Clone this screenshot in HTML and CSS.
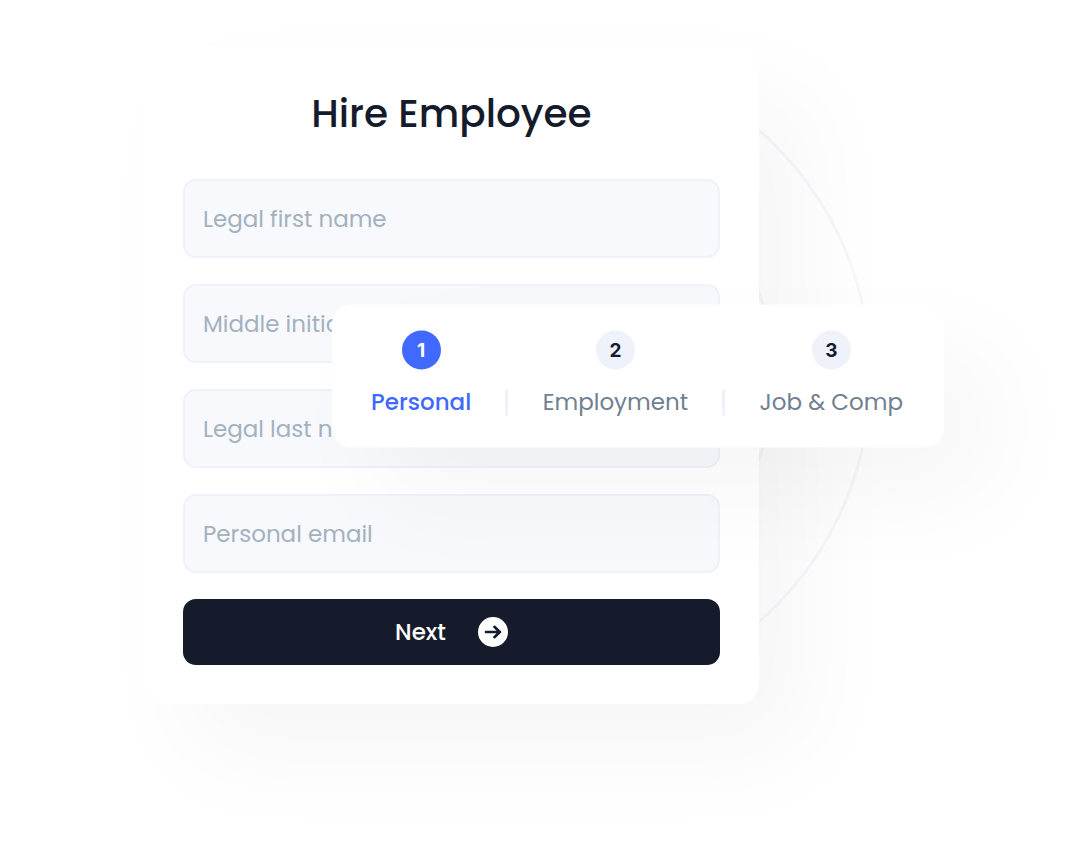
FILE: index.html
```html
<!DOCTYPE html>
<html lang="en">
<head>
  <meta charset="UTF-8">
  <meta name="viewport" content="width=device-width, initial-scale=1.0">
  <title>Hire Employee</title>
  <link rel="stylesheet" href="styles.css">
</head>
<body>

  <main class="stage">
    <div class="ring ring-outer"></div>
    <div class="ring ring-inner"></div>

    <form class="card">
      <h1>Hire Employee</h1>
      <div class="fields">
        <input type="text" id="first-name" aria-label="Legal first name" placeholder="Legal first name">
        <input type="text" id="middle-initial" aria-label="Middle initial" placeholder="Middle initial">
        <input type="text" id="last-name" aria-label="Legal last name" placeholder="Legal last name">
        <input type="email" id="email" aria-label="Personal email" placeholder="Personal email">
        <button type="button" class="next-btn">
          Next
          <svg width="30" height="30" viewBox="0 0 30 30" aria-hidden="true">
            <circle cx="15" cy="15" r="15" fill="#fff"/>
            <path d="M8 15h14M16.4 9.8 21.8 15l-5.4 5.2" fill="none" stroke="#161b2b" stroke-width="2.6" stroke-linecap="round" stroke-linejoin="round"/>
          </svg>
        </button>
      </div>
    </form>

    <div class="steps">
      <div class="step active">
        <span class="num">1</span>
        <span>Personal</span>
      </div>
      <div class="divider"></div>
      <div class="step">
        <span class="num">2</span>
        <span>Employment</span>
      </div>
      <div class="divider"></div>
      <div class="step">
        <span class="num">3</span>
        <span>Job &amp; Comp</span>
      </div>
    </div>
  </main>

</body>
</html>
```

FILE: styles.css
```css
* {
  box-sizing: border-box;
}
body {
  margin: 0;
  min-height: 100vh;
  padding: 47px 24px;
  background: #fff;
  font-family: 'Poppins', 'Inter', sans-serif;
  color: #161b2b;
  overflow-x: hidden;
}
.stage {
  position: relative;
  max-width: 800px;
  margin: 0 auto;
}

/* rings behind the card */
.ring {
  position: absolute;
  top: 50%;
  left: 50%;
  border: 3px solid #f6f7fc;
  border-radius: 50%;
  transform: translate(-50%, -50%);
}
.ring-outer {
  width: 656px;
  height: 656px;
}
.ring-inner {
  width: 464px;
  height: 464px;
}

.card {
  position: relative;
  width: 615px;
  max-width: 100%;
  padding: 39px;
  background: #fff;
  border-radius: 20px;
  box-shadow: 46px 48px 104px rgba(0, 0, 0, 0.04);
}
h1 {
  margin: 0 0 37px;
  font-size: 39px;
  font-weight: 500;
  line-height: 56px;
  text-align: center;
}
.fields {
  display: flex;
  flex-direction: column;
  gap: 26px;
}
input {
  width: 100%;
  height: 79px;
  padding: 0 18px;
  border: 2px solid #eff1fb;
  border-radius: 13px;
  background: #f7f9fd;
  font-family: inherit;
  font-size: 23px;
  color: #161b2b;
}
input::placeholder {
  color: #a4b1be;
  opacity: 1;
}
.next-btn {
  display: flex;
  justify-content: center;
  align-items: center;
  gap: 32px;
  height: 66px;
  border: none;
  border-radius: 13px;
  background: #161b2b;
  color: #fff;
  font-family: inherit;
  font-size: 23px;
  font-weight: 500;
  cursor: pointer;
}

/* step bar lies over the form */
.steps {
  position: absolute;
  top: 50%;
  right: 0;
  display: flex;
  justify-content: space-between;
  align-items: flex-end;
  width: 612px;
  max-width: 100%;
  padding: 26px 41px 26px 39px;
  background: #fff;
  border-radius: 20px;
  box-shadow: 46px 48px 104px rgba(0, 0, 0, 0.04);
  transform: translateY(-50%);
}
.step {
  display: flex;
  flex-direction: column;
  align-items: center;
  gap: 13px;
  font-size: 23px;
  line-height: 39px;
  color: #708090;
}
.step.active {
  color: #3f69ff;
  font-weight: 500;
}
.num {
  width: 39px;
  height: 39px;
  border-radius: 50%;
  background: #eff1fb;
  color: #161b2b;
  font-family: 'Inter', sans-serif;
  font-size: 19px;
  font-weight: 700;
  text-align: center;
}
.active .num {
  background: #3f69ff;
  color: #fff;
}
.divider {
  width: 3px;
  height: 26px;
  margin-bottom: 6px;
  background: #eff1fb;
}
```
